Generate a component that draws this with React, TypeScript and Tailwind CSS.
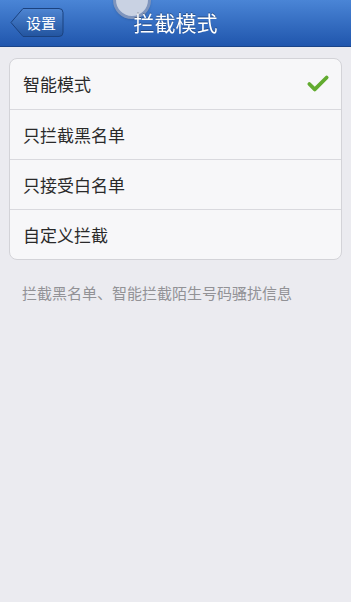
import { Check } from "lucide-react";

const modes = ["智能模式", "只拦截黑名单", "只接受白名单", "自定义拦截"];

function BackButton({ label }: { label: string }) {
  return (
    <button className="relative w-[54px] h-[31px] flex items-center pl-[16px]">
      <svg className="absolute inset-0" width="54" height="31" viewBox="0 0 54 31">
        <defs>
          <linearGradient id="bb" x1="0" y1="0" x2="0" y2="1">
            <stop offset="0" stopColor="#4f86d3" />
            <stop offset="1" stopColor="#22549f" />
          </linearGradient>
        </defs>
        <path
          d="M1 15.5 L13 1.5 H49 a4 4 0 0 1 4 4 V25.5 a4 4 0 0 1 -4 4 H13 Z"
          fill="url(#bb)"
          stroke="#1b427f"
          strokeWidth="1"
        />
      </svg>
      <span className="relative text-white text-[15px] leading-none">{label}</span>
    </button>
  );
}

export default function App() {
  const font = { fontFamily: '"Noto Sans CJK SC", "Noto Sans", sans-serif' };
  return (
    <div className="w-[351px] h-[602px] bg-[#ebebf0] overflow-hidden" style={font}>
      <div className="relative h-[47px] px-[10px] bg-gradient-to-b from-[#4a85d6] to-[#2056ad] border-b border-[#1a4489] grid grid-cols-[1fr_auto_1fr] items-center">
        {/* touch indicator overlay */}
        <div className="absolute left-[113px] top-[-19px] w-[38px] h-[38px] rounded-full bg-[#c9d2e3] border-[3px] border-[#7f95bd] shadow" />
        <div className="flex mt-[-1px]">
          <BackButton label="设置" />
        </div>
        <span className="relative text-white text-[21px] leading-none mt-[-2px] drop-shadow-[0_-1px_0_rgba(0,0,0,0.3)]">
          拦截模式
        </span>
        <div />
      </div>

      <div className="px-[9px] pt-[11px] flex flex-col gap-[22px]">
        <div className="rounded-[8px] bg-[#f7f7f9] border border-[#d3d3d8] overflow-hidden flex flex-col">
          {modes.map((m, i) => (
            <div
              key={m}
              className={`h-[50px] flex items-center justify-between pl-[13px] pr-[10px] ${
                i > 0 ? "border-t border-[#d9d9de]" : ""
              }`}
            >
              <span className="text-[17px] text-[#2a2a2a]">{m}</span>
              {i === 0 && <Check className="w-[26px] h-[26px] text-[#62ab30]" strokeWidth={3.5} />}
            </div>
          ))}
        </div>

        <p className="pl-[13px] text-[15px] text-[#929296]">拦截黑名单、智能拦截陌生号码骚扰信息</p>
      </div>
    </div>
  );
}
